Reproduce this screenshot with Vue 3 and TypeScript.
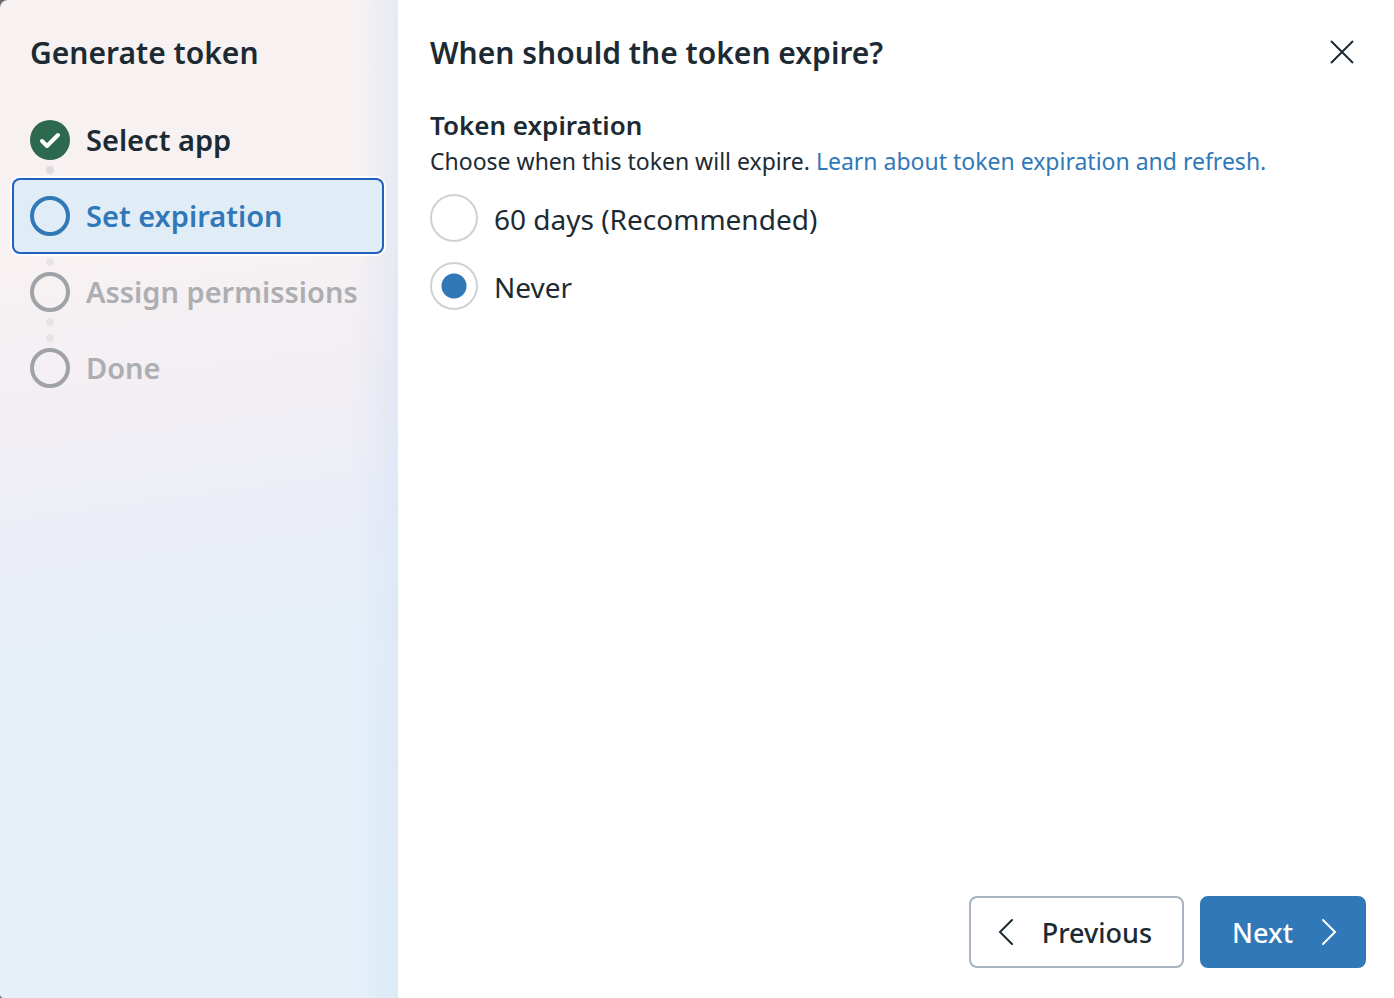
<script setup lang="ts">
import { ref } from 'vue'

type StepState = 'done' | 'current' | 'upcoming'

interface Step {
  label: string
  state: StepState
  dotAbove: boolean
  dotBelow: boolean
}

const steps: Step[] = [
  { label: 'Select app', state: 'done', dotAbove: false, dotBelow: true },
  { label: 'Set expiration', state: 'current', dotAbove: false, dotBelow: false },
  { label: 'Assign permissions', state: 'upcoming', dotAbove: true, dotBelow: true },
  { label: 'Done', state: 'upcoming', dotAbove: true, dotBelow: false },
]

const options = [
  { value: '60', label: '60 days (Recommended)' },
  { value: 'never', label: 'Never' },
]

const expiration = ref('never')
</script>

<template>
  <div class="dialog">
    <aside class="sidebar">
      <h1 class="title">Generate token</h1>
      <ol class="steps">
        <li v-for="step in steps" :key="step.label">
          <button
            type="button"
            class="step"
            :class="step.state"
            :disabled="step.state === 'upcoming'"
            :aria-current="step.state === 'current' ? 'step' : undefined"
          >
            <span class="track">
              <span class="dot" :class="{ hidden: !step.dotAbove }"></span>
              <span class="marker">
                <svg v-if="step.state === 'done'" viewBox="0 0 40 40" aria-hidden="true">
                  <path d="M12 21 L17 26 L28 15" />
                </svg>
              </span>
              <span class="dot" :class="{ hidden: !step.dotBelow }"></span>
            </span>
            <span class="label">{{ step.label }}</span>
          </button>
        </li>
      </ol>
    </aside>

    <main class="panel">
      <header class="head">
        <h2 class="title">When should the token expire?</h2>
        <button type="button" class="close" aria-label="Close">
          <svg viewBox="0 0 32 32" aria-hidden="true">
            <path d="M5 5 L27 27 M27 5 L5 27" />
          </svg>
        </button>
      </header>

      <section class="content">
        <h3 id="expiration-heading">Token expiration</h3>
        <p>
          Choose when this token will expire.
          <a href="#">Learn about token expiration and refresh.</a>
        </p>
        <div class="options" role="radiogroup" aria-labelledby="expiration-heading">
          <label v-for="option in options" :key="option.value" class="option">
            <input v-model="expiration" type="radio" name="expiration" :value="option.value" />
            <span>{{ option.label }}</span>
          </label>
        </div>
      </section>

      <footer class="actions">
        <button type="button" class="btn secondary">
          <svg viewBox="0 0 16 28" aria-hidden="true"><path d="M14 2 L2 14 L14 26" /></svg>
          <span>Previous</span>
        </button>
        <button type="button" class="btn primary">
          <span>Next</span>
          <svg viewBox="0 0 16 28" aria-hidden="true"><path d="M2 2 L14 14 L2 26" /></svg>
        </button>
      </footer>
    </main>
  </div>
</template>

<style>
html,
body {
  margin: 0;
  background: #6b6869;
}
</style>

<style scoped>
.dialog {
  display: flex;
  min-height: 100vh;
  font-family: 'Noto Sans', 'Open Sans', sans-serif;
  color: #1c2b33;
}

.dialog * {
  box-sizing: border-box;
}

h1,
h2,
h3,
p,
ol {
  margin: 0;
  padding: 0;
}

button {
  font: inherit;
  color: inherit;
  cursor: pointer;
}

svg {
  display: block;
  fill: none;
  stroke: currentColor;
}

.title {
  font-size: 30px;
  line-height: 42px;
  font-weight: 600;
}

.sidebar {
  flex: none;
  width: 398px;
  padding: 32px 14px 0 12px;
  border-top-left-radius: 8px;
  border-bottom-left-radius: 4px;
  background:
    linear-gradient(90deg, rgba(214, 226, 248, 0) 354px, rgba(206, 222, 244, 0.4) 398px),
    linear-gradient(172deg, #f8f1f1 0%, #f7f1f2 26%, #f1eef4 42%, #ebeef8 53%, #e6f0f9 66%, #e5f0f9 100%);
}

.sidebar .title {
  padding-left: 18px;
}

.steps {
  margin-top: 28px;
  list-style: none;
}

.step {
  display: flex;
  align-items: center;
  gap: 16px;
  width: 100%;
  padding: 0 18px;
  border: 0;
  border-radius: 8px;
  background: none;
  font-size: 29px;
  line-height: 36px;
  font-weight: 600;
  text-align: left;
  white-space: nowrap;
}

.step.current {
  background: #e1edf6;
  box-shadow:
    inset 0 0 0 2px #2160bd,
    0 0 0 2px #fff;
  color: #3178b8;
}

.step.upcoming {
  color: #adaeb2;
}

.track {
  display: flex;
  flex-direction: column;
  align-items: center;
  gap: 6px;
  padding: 4px 0;
}

.dot {
  width: 8px;
  height: 8px;
  border-radius: 50%;
  background: #dfdadb;
}

.upcoming .dot {
  background: #e8e3e5;
}

.dot.hidden {
  visibility: hidden;
}

.marker {
  width: 40px;
  height: 40px;
  border: 4px solid #9fa3a8;
  border-radius: 50%;
}

.current .marker {
  border-color: #3178b8;
}

.done .marker {
  border: 0;
  background: #2c694e;
  color: #fff;
}

.marker path {
  stroke-width: 4;
  stroke-linecap: round;
  stroke-linejoin: round;
}

.panel {
  flex: 1;
  display: flex;
  flex-direction: column;
  padding: 32px 28px 30px 32px;
  background: #fff;
}

.head {
  display: flex;
  align-items: flex-start;
  justify-content: space-between;
  padding-right: 8px;
}

.close {
  margin-top: 4px;
  padding: 0;
  border: 0;
  background: none;
}

.close svg {
  width: 32px;
  height: 32px;
  stroke-width: 2;
}

.content {
  flex: 1;
  padding-top: 31px;
}

h3 {
  font-size: 26px;
  line-height: 40px;
  font-weight: 600;
}

p {
  font-size: 23px;
  line-height: 32px;
}

a {
  color: #3178b8;
  text-decoration: none;
}

.options {
  display: flex;
  flex-direction: column;
  align-items: flex-start;
  gap: 20px;
  margin-top: 17px;
}

.option {
  display: flex;
  align-items: center;
  gap: 16px;
  font-size: 28px;
  line-height: 40px;
  cursor: pointer;
}

.option span,
.btn span {
  padding-top: 2px;
}

.option input {
  appearance: none;
  width: 48px;
  height: 48px;
  margin: 0;
  border: 2px solid #cfd1d6;
  border-radius: 50%;
  background: #fff;
}

.option input:checked {
  background: radial-gradient(circle, #3178b8 12px, #fff 13px);
}

.actions {
  display: flex;
  justify-content: flex-end;
  gap: 16px;
}

.btn {
  display: flex;
  align-items: center;
  gap: 28px;
  height: 72px;
  border: 2px solid #a7b3be;
  border-radius: 8px;
  background: #fff;
  font-size: 27px;
  line-height: 40px;
  font-weight: 500;
}

.btn svg {
  width: 16px;
  height: 28px;
  stroke-width: 2;
  stroke-linecap: round;
}

.btn.secondary {
  padding: 0 30px 0 27px;
}

.btn.primary {
  padding: 0 27px 0 30px;
  border-color: #3178b8;
  background: #3178b8;
  color: #fff;
}
</style>
